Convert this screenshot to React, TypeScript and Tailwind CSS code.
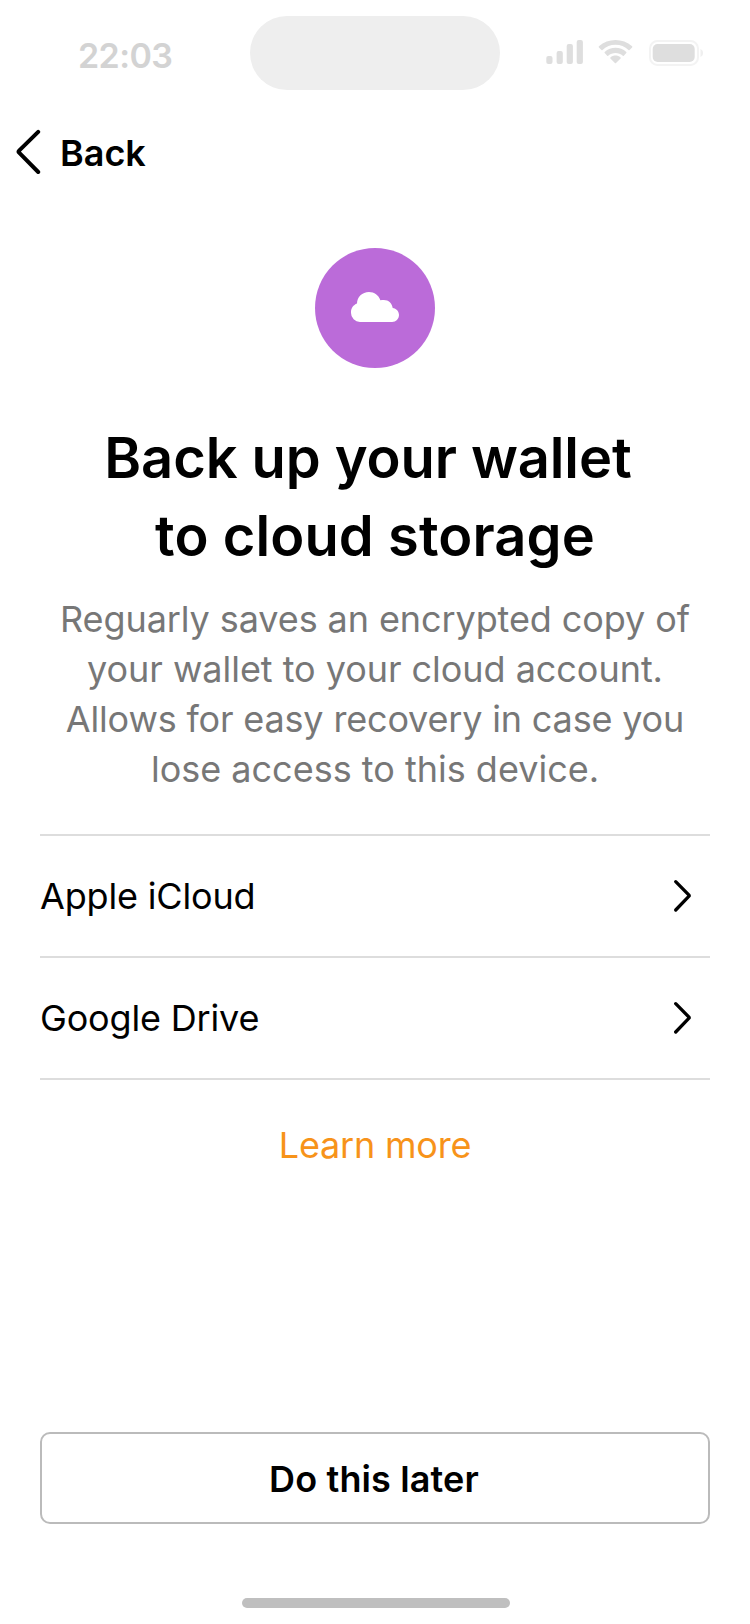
import React from "react";

function StatusIcons() {
  return (
    <svg width="160" height="30" viewBox="545 38 160 30" fill="#dedede" aria-hidden="true">
      <rect x="546.3" y="56" width="6.2" height="8" rx="2" />
      <rect x="556.6" y="51" width="6.2" height="13" rx="2" />
      <rect x="566.7" y="44" width="6.2" height="20" rx="2" />
      <rect x="576.7" y="40" width="6.2" height="24" rx="2" />
      <path d="M615.5 44.8c4.9 0 9.5 1.9 13 5.2.3.3.7.3 1 0l2.6-2.6c.3-.3.3-.8 0-1.1-9.3-8.5-23.9-8.5-33.2 0-.3.3-.3.8 0 1.1l2.6 2.6c.3.3.7.3 1 0 3.5-3.3 8.1-5.2 13-5.2z" />
      <path d="M615.5 52.9c2.7 0 5.3 1 7.3 2.8.3.3.7.3 1 0l2.5-2.6c.3-.3.3-.8 0-1.1-6.1-5.6-15.5-5.6-21.6 0-.3.3-.3.8 0 1.1l2.5 2.6c.3.3.7.3 1 0 2-1.8 4.6-2.8 7.3-2.8z" />
      <path d="M620.6 58.5c.3-.3.3-.8 0-1.1-3-2.4-7.2-2.4-10.2 0-.3.3-.3.8 0 1.1l4.5 4.6c.3.3.8.3 1.1 0z" />
      <rect x="650" y="41" width="48" height="24" rx="7.5" fill="none" stroke="#f3f3f3" strokeWidth="2" />
      <rect x="652.7" y="44" width="42" height="18" rx="5" />
      <path d="M700.5 49v8c1.600-.7 2.600-2.200 2.600-4s-1-3.300-2.600-4z" fill="#efefef" />
    </svg>
  );
}

function CloudIcon() {
  return (
    <svg width="48" height="30" viewBox="351 292 48 30" fill="white" aria-hidden="true">
      <path d="M360 322a9 9 0 0 1-9-9v-1c0-3.800 2.400-7.100 6-8.500 0-6.500 5.200-11.500 12-11.500 5.300 0 9.700 3.300 11.400 8.200 1.100-.2 2.300-.3 3.400-.3 4.800 0 8.500 3.500 8.900 8.100 3.600.4 6.300 3.300 6.300 7s-3.100 7-7 7z" />
    </svg>
  );
}

function ProviderRow({ name }: { name: string }) {
  return (
    <button className="flex h-[122px] w-full items-center justify-between border-b-2 border-[#dddddd] pr-[19px] text-left">
      <span className="tracking-[-0.17px]">{name}</span>
      <svg width="19" height="34" viewBox="0 0 19 34" fill="none" stroke="black" strokeWidth="3.3" strokeLinecap="round" strokeLinejoin="round" aria-hidden="true">
        <path d="M3.700 2.700 17 16.200c.3.300.3.700 0 1L3.700 31" />
      </svg>
    </button>
  );
}

export default function App() {
  return (
    <main className="flex h-[1624px] w-[750px] flex-col bg-white font-['Inter',sans-serif] text-[36px] leading-[50px] text-black">
      <header className="flex h-[90px] pt-4">
        <div className="w-[250px] pt-[15px] pl-[78px] text-[34px] font-semibold tracking-[-0.6px] text-[#d3d3d3]">22:03</div>
        <div className="h-[74px] w-[250px] rounded-full bg-[#eeeeee]" />
        <div className="pt-[22px] pl-[45px]">
          <StatusIcons />
        </div>
      </header>

      <nav className="flex h-[124px] items-start pt-[36px] pl-4">
        <button className="flex items-center">
          <svg width="26" height="48" viewBox="16 128 26 48" fill="none" stroke="black" strokeWidth="4" strokeLinecap="round" strokeLinejoin="round" aria-hidden="true">
            <path d="M38.200 131.800 19.100 150.700c-.6.600-.6 1.400 0 2L38.200 172" />
          </svg>
          <span className="pt-[2px] pl-[18px] font-semibold">Back</span>
        </button>
      </nav>

      <section className="flex flex-col items-center px-10 pt-[34px] text-center">
        <div className="flex size-[120px] items-center justify-center rounded-full bg-[#bb6bd9]">
          <div className="-mt-[2px]">
            <CloudIcon />
          </div>
        </div>
        <h1 className="mt-[51px] text-[56px] leading-[78px] font-semibold">
          <span className="tracking-[-0.08px]">Back up your wallet&nbsp;</span>
          <br />
          <span className="tracking-[0.1px]">to cloud storage</span>
        </h1>
        <p className="mt-[19px] text-[#777777]">
          <span className="tracking-[-0.09px]">Reguarly saves an encrypted copy of</span>
          <br />
          <span className="tracking-[-0.04px]">your wallet to your cloud account.</span>
          <br />
          <span className="tracking-[-0.17px]">Allows for easy recovery in case you</span>
          <br />
          lose access to this device.
        </p>
      </section>

      <section className="mx-10 mt-10 border-t-2 border-[#dddddd]">
        <ProviderRow name="Apple iCloud" />
        <ProviderRow name="Google Drive" />
      </section>

      <button className="mt-10 self-center tracking-[-0.2px] text-[#f7931a]">Learn more</button>

      <footer className="mt-auto flex flex-col items-center px-10 pb-4">
        <button className="h-[92px] w-full rounded-[10px] border-2 border-[#bbbbbb] pt-[2px] pr-[2px] font-semibold tracking-[0.13px]">Do this later</button>
        <div className="mt-[74px] ml-[2px] h-[10px] w-[268px] rounded-full bg-[#bfbfbf]" />
      </footer>
    </main>
  );
}
